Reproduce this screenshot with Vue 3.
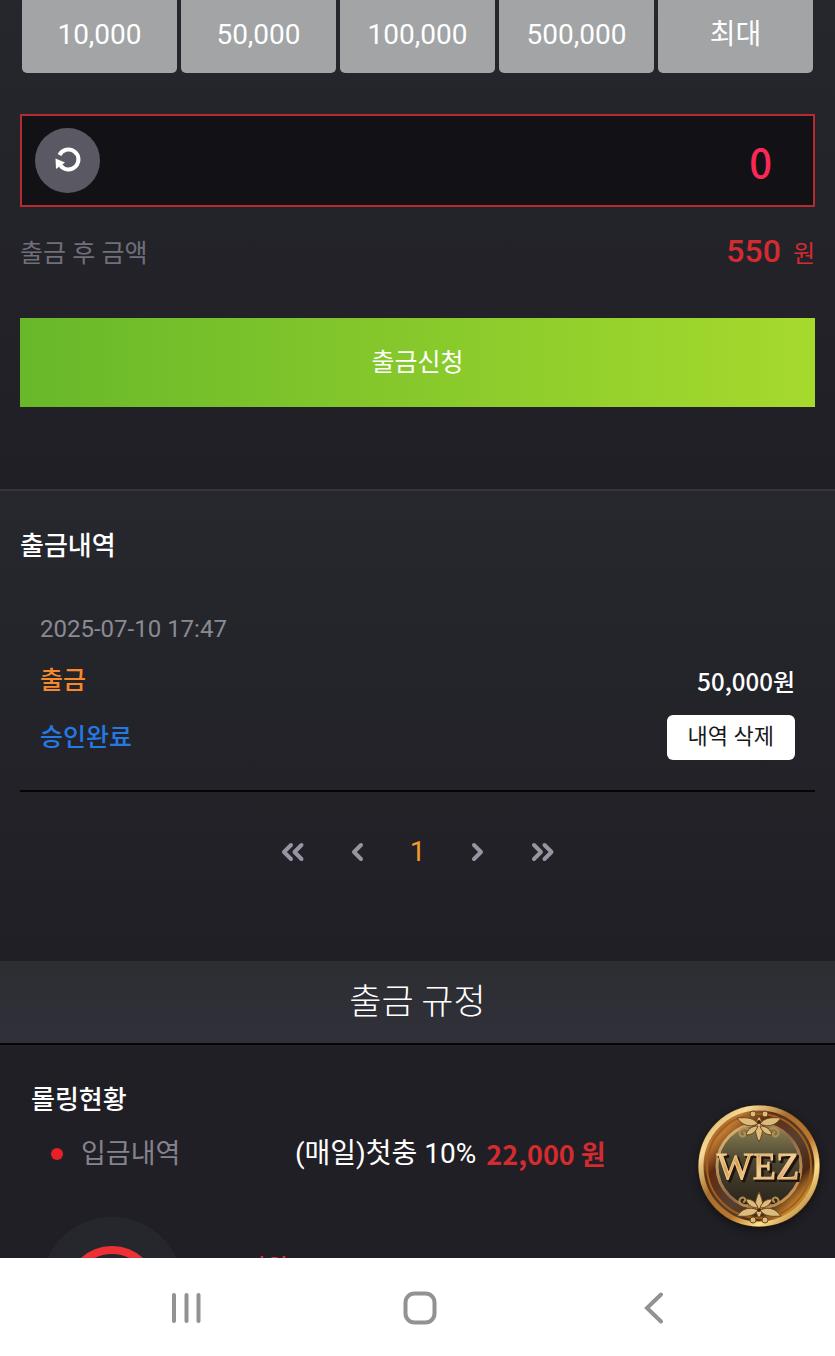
<template>
  <div class="screen">
    <main class="page">
      <section class="withdraw">
        <div class="amounts">
          <button
            v-for="amount in amounts"
            :key="amount.label"
            type="button"
            class="amount"
            @click="addAmount(amount.value)"
          >
            {{ amount.label }}
          </button>
        </div>

        <div class="entry">
          <button type="button" class="entry__reset" aria-label="초기화" @click="total = 0">
            <svg viewBox="0 0 32 32" width="32" height="32" aria-hidden="true">
              <path
                d="M7.500 10A10 10 0 1 1 8.500 20.500"
                fill="none"
                stroke="#fff"
                stroke-width="4"
              />
              <path d="M3.500 13.500L13 17.500L4 24Z" fill="#fff" />
            </svg>
          </button>
          <input
            v-model="total"
            class="entry__input"
            type="text"
            inputmode="numeric"
            aria-label="출금 금액"
          />
        </div>

        <div class="balance">
          <span class="balance__label">출금 후 금액</span>
          <span class="balance__value">550<small>원</small></span>
        </div>

        <button type="button" class="submit">출금신청</button>
      </section>

      <section class="history">
        <h2 class="title">출금내역</h2>
        <article v-for="item in history" :key="item.date" class="record">
          <time class="record__date">{{ item.date }}</time>
          <div class="record__row">
            <span class="record__type">{{ item.type }}</span>
            <strong class="record__amount">{{ item.amount }}</strong>
          </div>
          <div class="record__row">
            <span class="record__status">{{ item.status }}</span>
            <button type="button" class="record__delete">내역 삭제</button>
          </div>
        </article>

        <nav class="pager" aria-label="페이지">
          <button type="button" class="pager__step pager__step--wide" aria-label="처음">
            <svg viewBox="0 0 24 20" width="24" height="20" aria-hidden="true">
              <path d="M10 3L3 10L10 17M20.500 3L13.500 10L20.500 17" />
            </svg>
          </button>
          <button type="button" class="pager__step" aria-label="이전">
            <svg viewBox="0 0 14 20" width="14" height="20" aria-hidden="true">
              <path d="M10 3L3 10L10 17" />
            </svg>
          </button>
          <button type="button" class="pager__current" aria-current="page">1</button>
          <button type="button" class="pager__step" aria-label="다음">
            <svg viewBox="0 0 14 20" width="14" height="20" aria-hidden="true">
              <path d="M3 3L10 10L3 17" />
            </svg>
          </button>
          <button type="button" class="pager__step pager__step--wide" aria-label="마지막">
            <svg viewBox="0 0 24 20" width="24" height="20" aria-hidden="true">
              <path d="M3 3L10 10L3 17M13.500 3L20.500 10L13.500 17" />
            </svg>
          </button>
        </nav>
      </section>

      <h2 class="rules-heading">출금 규정</h2>

      <section class="rolling">
        <h3 class="title">롤링현황</h3>
        <div class="deposit">
          <span class="deposit__label">입금내역</span>
          <span class="deposit__bonus">(매일)첫충 10%</span>
          <strong class="deposit__amount">22,000 원</strong>
        </div>
        <div class="progress">
          <svg viewBox="0 0 142 142" width="142" height="142" aria-hidden="true">
            <circle cx="71" cy="71" r="71" fill="#25272c" />
            <circle cx="71" cy="75" r="42" fill="none" stroke="#ed2f38" stroke-width="8" />
          </svg>
          <span class="progress__state">미완료</span>
        </div>
      </section>

      <a class="badge" href="#" aria-label="WEZ">
        <svg viewBox="0 0 124 124" width="124" height="124" aria-hidden="true">
          <defs>
            <linearGradient id="rim" x1="0" y1="0" x2="1" y2="1">
              <stop offset="0" stop-color="#c69a4e" />
              <stop offset=".2" stop-color="#f5dc98" />
              <stop offset=".4" stop-color="#a8702c" />
              <stop offset=".6" stop-color="#b9772c" />
              <stop offset=".75" stop-color="#ffe08a" />
              <stop offset="1" stop-color="#8c5416" />
            </linearGradient>
            <linearGradient id="bowl" x1="0" y1="0" x2="1" y2="1">
              <stop offset="0" stop-color="#6a3410" />
              <stop offset=".2" stop-color="#c07a34" />
              <stop offset=".32" stop-color="#5e2c12" />
              <stop offset=".55" stop-color="#57402f" />
              <stop offset=".72" stop-color="#4c2812" />
              <stop offset=".82" stop-color="#c8862e" />
              <stop offset="1" stop-color="#54240e" />
            </linearGradient>
            <linearGradient id="ring" x1="0" y1="0" x2="1" y2="1">
              <stop offset="0" stop-color="#f0c878" />
              <stop offset=".5" stop-color="#8d6748" />
              <stop offset="1" stop-color="#e0a45c" />
            </linearGradient>
            <linearGradient id="face" x1="0" y1="0" x2="0" y2="1">
              <stop offset="0" stop-color="#8d8156" />
              <stop offset=".45" stop-color="#4b4530" />
              <stop offset="1" stop-color="#28211a" />
            </linearGradient>
            <linearGradient id="letters" x1="0" y1="0" x2="1" y2="1">
              <stop offset="0" stop-color="#fff0c2" />
              <stop offset=".35" stop-color="#d79a4c" />
              <stop offset=".6" stop-color="#f4d09a" />
              <stop offset="1" stop-color="#b9783c" />
            </linearGradient>
            <g id="leaves">
              <path d="M0 -10C5 -3 5 6 0 16C-5 6 -5 -3 0 -10Z" />
              <path d="M1 -2C5 -8 11 -9 22 -8C17 -1 10 2 1 -2Z" />
              <path d="M-1 -2C-5 -8 -11 -9 -22 -8C-17 -1 -10 2 -1 -2Z" />
              <path d="M1 0C8 0 12 4 13 9C7 9 3 6 1 0Z" />
              <path d="M-1 0C-8 0 -12 4 -13 9C-7 9 -3 6 -1 0Z" />
              <circle cx="6" cy="-12" r="3" />
              <circle cx="-6" cy="-12" r="3" />
              <path
                d="M11 3C18 0 22 7 18 10C14 12 12 7 16 6M-11 3C-18 0 -22 7 -18 10C-14 12 -12 7 -16 6"
                fill="none"
                stroke="#b58f50"
                stroke-width="2"
              />
            </g>
          </defs>
          <circle cx="62" cy="62" r="61" fill="#6b3d12" />
          <circle cx="62" cy="62" r="58" fill="url(#bowl)" stroke="url(#rim)" stroke-width="5" />
          <circle cx="62" cy="62" r="52" fill="none" stroke="#a2601f" stroke-width="2" />
          <circle cx="62" cy="62" r="42" fill="url(#face)" stroke="url(#ring)" stroke-width="3" />
          <g fill="#dcbc7c" stroke="#6a431c" stroke-width="1">
            <use href="#leaves" transform="translate(62 22)" />
            <use href="#leaves" transform="translate(62 104) scale(1 -1)" />
          </g>
          <circle cx="62" cy="18" r="2" fill="#4a2510" />
          <circle cx="62" cy="106" r="2" fill="#4a2510" />
          <text x="63" y="77" text-anchor="middle" class="badge__shade">WEZ</text>
          <text x="61" y="75" text-anchor="middle" class="badge__text">WEZ</text>
        </svg>
      </a>
    </main>

    <nav class="system-bar" aria-label="시스템">
      <button type="button" aria-label="최근 앱">
        <svg viewBox="0 0 36 36" width="36" height="36" aria-hidden="true">
          <path d="M6 5V31M18.500 5V31M30.500 5V31" />
        </svg>
      </button>
      <button type="button" aria-label="홈">
        <svg viewBox="0 0 36 36" width="36" height="36" aria-hidden="true">
          <rect x="3.500" y="3.500" width="29" height="29" rx="9" />
        </svg>
      </button>
      <button type="button" aria-label="뒤로">
        <svg viewBox="0 0 36 36" width="36" height="36" aria-hidden="true">
          <path d="M25 4.500L11 18L25 31.500" />
        </svg>
      </button>
    </nav>
  </div>
</template>

<script setup>
import { ref } from "vue";

const total = ref(0);

const amounts = [
  { label: "10,000", value: 10000 },
  { label: "50,000", value: 50000 },
  { label: "100,000", value: 100000 },
  { label: "500,000", value: 500000 },
  { label: "최대", value: 550 }
];

const history = [
  {
    date: "2025-07-10 17:47",
    type: "출금",
    amount: "50,000원",
    status: "승인완료"
  }
];

function addAmount(value) {
  total.value = Number(total.value) + value;
}
</script>

<style>
body {
  background: #201f25;
  margin: 0;
}
</style>

<style scoped>
.screen {
  color: #fff;
  display: flex;
  flex-direction: column;
  font-family: Roboto, "Noto Sans CJK KR", sans-serif;
  font-size: 25px;
  height: 100vh;
  line-height: 36px;
}

.screen *,
.screen *::before {
  box-sizing: border-box;
}

button {
  background: none;
  border: 0;
  color: inherit;
  cursor: pointer;
  font: inherit;
  padding: 0;
}

svg {
  display: block;
}

.page {
  flex: 1;
  min-height: 0;
  overflow: hidden;
  position: relative;
}

.withdraw {
  background: linear-gradient(#25272c, #201f25);
  padding: 0 20px 82px;
}

.amounts {
  display: flex;
  gap: 4px;
  padding: 0 2px;
}

.amount {
  background: #a2a4a5;
  border-radius: 0 0 5px 5px;
  flex: 1;
  font-size: 28px;
  padding: 17px 0 20px;
}

.entry {
  align-items: center;
  background: #121116;
  border: 2px solid #b52b30;
  display: flex;
  height: 93px;
  margin-top: 41px;
  padding: 0 41px 0 13px;
}

.entry__reset {
  background: #5a5963;
  border-radius: 50%;
  display: grid;
  flex: none;
  height: 65px;
  place-items: center;
  width: 65px;
}

.entry__input {
  background: none;
  border: 0;
  color: #fb2857;
  flex: 1;
  font-family: "Noto Sans CJK KR", sans-serif;
  font-size: 40px;
  font-weight: 500;
  min-width: 0;
  outline: 0;
  padding: 0;
  text-align: right;
}

.balance {
  align-items: baseline;
  display: flex;
  justify-content: space-between;
  margin-top: 26px;
}

.balance__label {
  color: #706f7b;
}

.balance__value {
  color: #d42b31;
  font-size: 32px;
  font-weight: 500;
}

.balance__value small {
  font-size: 24px;
  font-weight: 400;
  margin-left: 12px;
}

.submit {
  background: linear-gradient(90deg, #68b82a, #a6da2d);
  display: block;
  height: 89px;
  margin-top: 46px;
  width: 100%;
}

.history {
  background: linear-gradient(#26282d, #201f25);
  border-top: 2px solid #34363a;
  padding: 37px 20px 91px;
}

.title {
  font-size: 26px;
  font-weight: 500;
  margin: 0;
}

.record {
  border-bottom: 2px solid #050508;
  display: flex;
  flex-direction: column;
  gap: 16px;
  margin-top: 47px;
  padding: 0 20px 30px;
}

.record__date {
  color: #8b8a94;
  font-size: 24px;
}

.record__row {
  align-items: center;
  display: flex;
  justify-content: space-between;
}

.record__type {
  color: #f6892b;
  font-weight: 500;
}

.record__amount {
  font-family: "Noto Sans CJK KR", sans-serif;
  font-size: 24px;
  font-weight: 500;
}

.record__status {
  color: #2479e4;
  font-weight: 500;
}

.record__delete {
  background: #fff;
  border-radius: 6px;
  color: #18181b;
  font-size: 22px;
  height: 45px;
  padding: 0 21px 2px;
}

.pager {
  align-items: center;
  color: #9696a2;
  display: flex;
  gap: 20px;
  justify-content: center;
  margin-top: 42px;
}

.pager__step,
.pager__current {
  display: grid;
  height: 36px;
  place-items: center;
  width: 40px;
}

.pager__step--wide {
  width: 50px;
}

.pager path {
  fill: none;
  stroke: currentColor;
  stroke-linecap: round;
  stroke-linejoin: round;
  stroke-width: 4;
}

.pager__current {
  color: #f39a2e;
  font-size: 28px;
}

.rules-heading {
  background: linear-gradient(#2d2e32, #30303a);
  border-bottom: 2px solid #050508;
  font-family: "Noto Sans CJK KR", sans-serif;
  font-size: 35px;
  font-weight: 300;
  height: 84px;
  line-height: 76px;
  margin: 0;
  text-align: center;
}

.rolling {
  background: #201f25;
  padding: 37px 31px 0;
}

.deposit {
  align-items: center;
  display: flex;
  font-size: 27px;
  margin-top: 18px;
  padding-left: 20px;
}

.deposit::before {
  background: #e9202a;
  border-radius: 50%;
  content: "";
  height: 12px;
  margin-right: 18px;
  width: 12px;
}

.deposit__label {
  color: #85848e;
  flex: 0 0 214px;
}

.deposit__bonus {
  font-size: 28px;
  margin-right: 10px;
}

.deposit__amount {
  color: #d42b31;
  font-family: "Noto Sans CJK KR", sans-serif;
  font-weight: 700;
}

.progress {
  align-items: flex-start;
  display: flex;
  gap: 60px;
  margin-top: 45px;
  padding-left: 10px;
}

.progress__state {
  color: #ed2f38;
  margin-top: 34px;
}

.badge {
  bottom: 30px;
  position: absolute;
  right: 14px;
}

.badge svg {
  filter: drop-shadow(0 3px 5px rgba(0, 0, 0, 0.45));
}

.badge__text,
.badge__shade {
  font-family: "Liberation Serif", serif;
  font-size: 38px;
}

.badge__text {
  fill: url(#letters);
  stroke: #f3cb8a;
}

.badge__shade {
  fill: #20150e;
  stroke: #20150e;
  stroke-width: 2;
}

.system-bar {
  align-items: center;
  background: #fff;
  display: flex;
  gap: 198px;
  height: 98px;
  justify-content: center;
  padding: 2px 0 0 4px;
}

.system-bar path,
.system-bar rect {
  fill: none;
  stroke: #929292;
  stroke-linecap: round;
  stroke-width: 4;
}
</style>
